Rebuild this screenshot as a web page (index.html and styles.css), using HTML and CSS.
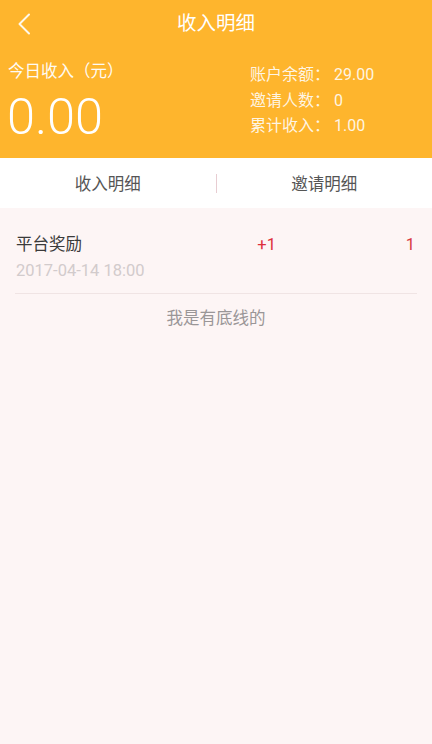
FILE: index.html
```html
<!DOCTYPE html>
<html lang="zh-CN">
<head>
<meta charset="utf-8">
<title>收入明细</title>
<link rel="stylesheet" href="styles.css">
</head>
<body>
<div class="page">
  <header class="top">
    <div class="nav">
      <a class="back" href="#" aria-label="返回">
        <svg width="14" height="22" viewBox="0 0 14 22"><path d="M12 1.5 L2.5 11 L12 20.5" fill="none" stroke="#fff" stroke-width="2" stroke-linecap="round" stroke-linejoin="round" opacity="0.9"/></svg>
      </a>
      <h1 class="title">收入明细</h1>
      <span></span>
    </div>
    <div class="summary">
      <div class="today">
        <div class="today-label">今日收入（元）</div>
        <div class="today-value">0.00</div>
      </div>
      <ul class="stats">
        <li><span class="k">账户余额：</span><span class="v">29.00</span></li>
        <li><span class="k">邀请人数：</span><span class="v">0</span></li>
        <li><span class="k">累计收入：</span><span class="v">1.00</span></li>
      </ul>
    </div>
  </header>
  <nav class="tabs">
    <div class="tab">收入明细</div>
    <div class="sep"></div>
    <div class="tab">邀请明细</div>
  </nav>
  <main class="list">
    <div class="row">
      <div class="info">
        <div class="name">平台奖励</div>
        <div class="date">2017-04-14 18:00</div>
      </div>
      <div class="amt">+1</div>
      <div class="total">1</div>
    </div>
    <div class="end">我是有底线的</div>
  </main>
</div>
</body>
</html>
```
FILE: styles.css
```css
* { box-sizing: border-box; margin: 0; padding: 0; }
html, body { height: 100%; }
body {
  font-family: Roboto, "Noto Sans CJK SC", "Noto Sans", sans-serif;
  background: #fdf5f5;
  color: #333;
}
.page { min-height: 100%; display: flex; flex-direction: column; }
.top { background: #feb52d; color: #fff; padding-bottom: 13px; }
.nav {
  height: 48px;
  display: grid;
  grid-template-columns: 50px 1fr 50px;
  align-items: center;
}
.back { display: flex; justify-content: center; align-items: center; height: 48px; padding-right: 2px; }
.title { text-align: center; font-size: 19.5px; font-weight: 400; line-height: 48px; }
.summary {
  display: grid;
  grid-template-columns: 242px 1fr;
  padding: 12px 0 0 8px;
}
.today-label { font-size: 16.5px; line-height: 24px; opacity: 0.95; }
.today-value {
  font-size: 50.5px;
  font-weight: 300;
  line-height: 56px;
  margin-top: 5px;
  margin-left: -1px;
}
.stats { list-style: none; margin-top: 2px; }
.stats li { font-size: 16px; line-height: 25.5px; color: rgba(255,255,255,0.88); display: flex; }
.stats .k { width: 84px; }
.tabs {
  background: #fff;
  height: 50px;
  display: grid;
  grid-template-columns: 1fr 1px 1fr;
  align-items: center;
}
.tab { text-align: center; font-size: 16.5px; color: #555; }
.sep { height: 19px; background: #e8cdd2; }
.list { flex: 1; background: #fdf5f5; padding: 0 15px; }
.row {
  display: grid;
  grid-template-columns: 1fr 1fr 1fr;
  align-items: start;
  padding: 25px 0 11px;
  border-bottom: 1px solid #f0e4e4;
}
.info { padding-left: 1px; }
.name { font-size: 16.5px; line-height: 24px; color: #3a3a3a; }
.date { font-size: 16.5px; line-height: 22px; color: #d2cbcc; margin-top: 3px; }
.amt { text-align: right; font-size: 16.5px; line-height: 24px; color: #dd2f3c; padding-right: 7px; }
.total { text-align: right; font-size: 16.5px; line-height: 24px; color: #d83842; padding-right: 2px; }
.end { text-align: center; font-size: 16.5px; line-height: 50px; color: #9a9697; }
```
